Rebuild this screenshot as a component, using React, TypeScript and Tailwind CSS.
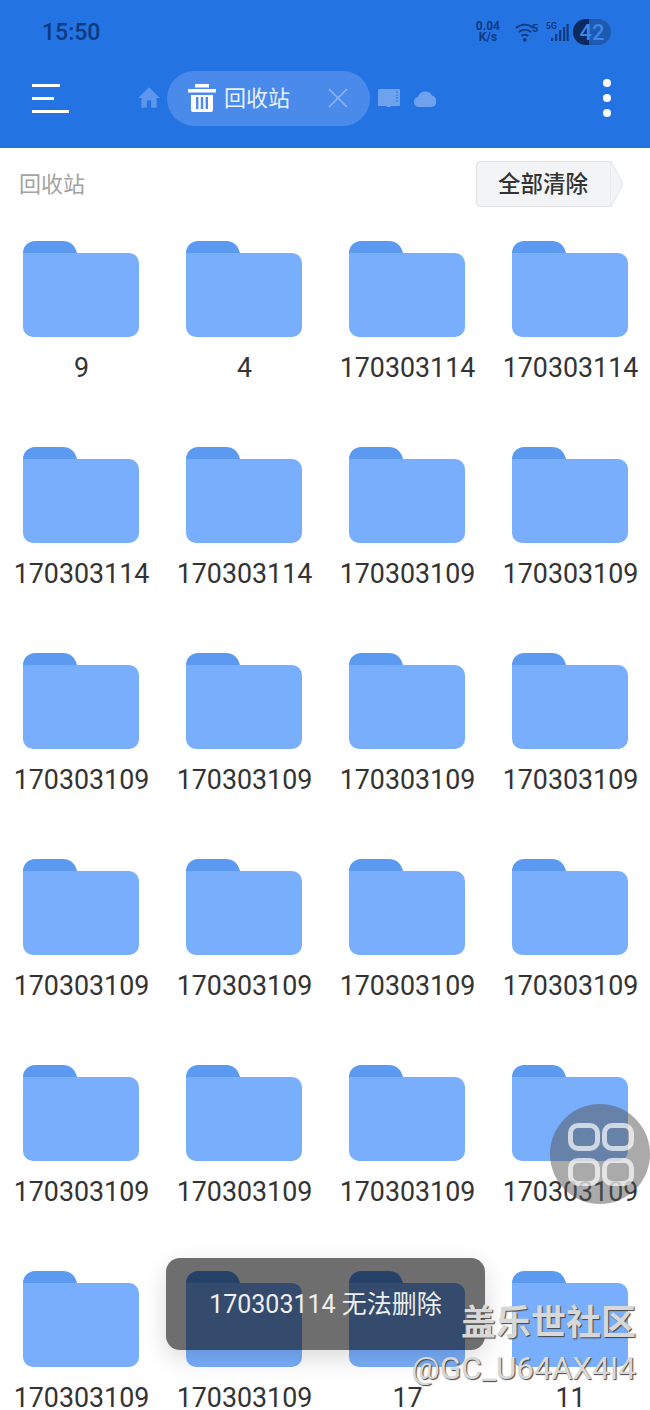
const labels = [
  "9", "4", "170303114", "170303114",
  "170303114", "170303114", "170303109", "170303109",
  "170303109", "170303109", "170303109", "170303109",
  "170303109", "170303109", "170303109", "170303109",
  "170303109", "170303109", "170303109", "170303109",
  "170303109", "170303109", "17", "11",
];

function Folder() {
  return (
    <svg width="116" height="96" viewBox="0 0 116 96" className="mr-[2px] block">
      <path d="M0 12a12 12 0 0 1 12-12h28c7 0 12 4 14 12z" fill="#5c9af2" />
      <path d="M0 12h106a10 10 0 0 1 10 10v64a10 10 0 0 1-10 10h-96a10 10 0 0 1-10-10z" fill="#78aefc" />
    </svg>
  );
}

function FolderItem({ label }: { label: string }) {
  return (
    <div className="flex h-[206px] flex-col items-center">
      <Folder />
      <div className="mt-[15px] text-[26.8px] leading-[32px] text-[#333]">{label}</div>
    </div>
  );
}

function StatusBar() {
  return (
    <div className="flex h-[62px] items-center justify-between pl-[42px] pr-[39px] pt-[2px] text-[#0f3a80]">
      <span className="text-[23px] font-medium leading-none">15:50</span>
      <div className="flex items-center">
        <div className="flex flex-col items-center text-[12px] font-bold leading-[11px]">
          <span>0.04</span>
          <span>K/s</span>
        </div>
        <svg width="24" height="20" viewBox="0 0 21 18" className="ml-[15px]" fill="none" stroke="#0f3a80" strokeWidth="1.700">
          <path d="M0.500 5.500c5-4 11-4 16 0M3 9c3.500-2.500 8-2.500 11 0M5.500 12.500c2-1.400 4-1.400 6 0" />
          <circle cx="8.500" cy="16" r="1.700" fill="#0f3a80" stroke="none" />
          <text x="15" y="9" fontSize="10" fontWeight="700" fill="#0f3a80" stroke="none">5</text>
          <path d="M14 12v5M18 12v5" strokeWidth="1" stroke="#3a6cb8" />
        </svg>
        <svg width="24" height="22" viewBox="0 0 24 22" className="ml-[7px]" fill="#0f3a80">
          <text x="0" y="8" fontSize="8.500" fontWeight="700">5G</text>
          <rect x="5" y="17" width="2.200" height="3" />
          <rect x="9" y="13" width="2.200" height="7" />
          <rect x="13" y="9" width="2.200" height="11" />
          <rect x="17" y="6" width="2.200" height="14" />
          <rect x="20.500" y="3" width="2.200" height="17" />
        </svg>
        <div className="relative ml-[3px] flex h-[26px] w-[38px] items-center justify-center overflow-hidden rounded-full bg-[#1d5bb3] text-[22px] font-medium text-[#3f86e6]">
          <div className="absolute inset-y-0 left-0 w-[16px] bg-[#0d2a5c]" />
          <span className="relative">42</span>
        </div>
      </div>
    </div>
  );
}

function Toolbar() {
  return (
    <div className="flex h-[86px] items-center pb-[14px] pl-[32px] pr-[39px]">
      <div className="flex w-[37px] flex-col gap-[10px]">
        <div className="h-[3px] w-[28px] bg-white" />
        <div className="h-[3px] w-[22px] bg-white" />
        <div className="h-[3px] w-[37px] bg-white" />
      </div>
      <svg width="26" height="26" viewBox="0 0 24 24" fill="#5e96ee" className="ml-[67px] mr-[5px]">
        <path d="M10 21v-7h4v7h5v-9h3L12 2 2 12h3v9z" />
      </svg>
      <div className="flex h-[55px] w-[203px] items-center rounded-full bg-[#4a8aea] pl-[21px] pr-[22px]">
        <svg width="28" height="28" viewBox="0 0 28 28" fill="#fff">
          <rect x="7" y="0" width="14" height="3.500" />
          <rect x="0" y="5" width="28" height="3.500" />
          <path d="M3 11h22v15a2 2 0 0 1-2 2h-18a2 2 0 0 1-2-2z" />
          <rect x="8" y="13" width="2.400" height="12" fill="#4a8aea" />
          <rect x="12.800" y="13" width="2.400" height="12" fill="#4a8aea" />
          <rect x="17.600" y="13" width="2.400" height="12" fill="#4a8aea" />
        </svg>
        <span className="ml-[8px] text-[22px] text-[#e8f1fd]">回收站</span>
        <svg width="20" height="20" viewBox="0 0 20 20" stroke="#8cb5f2" strokeWidth="1.700" className="ml-auto">
          <path d="M1 1l18 18M19 1l-18 18" />
        </svg>
      </div>
      <svg width="22" height="18" viewBox="0 0 22 18" className="ml-[8px]">
        <path d="M0 1a1 1 0 0 1 1-1h20a1 1 0 0 1 1 1v15a1 1 0 0 1-1 1h-8l-1 1h-3l-1-1h-8a1 1 0 0 1-1-1z" fill="#6fa2ee" />
        <path d="M18 3h2M18 6h2M18 9h2M18 12h2" stroke="#2f78e3" strokeWidth="1.200" />
      </svg>
      <svg width="22" height="18" viewBox="0 0 22 18" fill="#6fa2ee" className="ml-[14px]">
        <path d="M5 18a5 5 0 0 1-1-9.900 7.500 7.500 0 0 1 14-1.500 5.800 5.800 0 0 1-1 11.400z" />
      </svg>
      <div className="ml-auto flex flex-col gap-[7px]">
        <div className="h-[8px] w-[8px] rounded-full bg-white" />
        <div className="h-[8px] w-[8px] rounded-full bg-white" />
        <div className="h-[8px] w-[8px] rounded-full bg-white" />
      </div>
    </div>
  );
}

function App() {
  return (
    <div
      className="relative h-[1410px] w-[650px] overflow-hidden bg-white"
      style={{ fontFamily: 'Roboto, "Noto Sans CJK SC", sans-serif' }}
    >
      <div className="h-[148px] bg-[#2473e3]">
        <StatusBar />
        <Toolbar />
      </div>

      {/* Path row */}
      <div className="flex h-[93px] items-start justify-between pl-[19px] pr-[26px] pt-[13px]">
        <span className="mt-[9px] text-[22px] leading-[30px] text-[#a3a3a3]">回收站</span>
        <div className="flex h-[46px] items-center">
          <div className="flex h-[46px] w-[134px] items-center rounded-l-[5px] border border-r-0 border-[#e0e1e3] bg-[#f3f4f6] pl-[21px] pt-[2px] text-[22.500px] font-medium text-[#333]">
            全部清除
          </div>
          <svg width="14" height="46" viewBox="0 0 14 46">
            <path d="M0 .5h1l12 22.500-12 22.500h-1z" fill="#f3f4f6" stroke="#e0e1e3" strokeLinejoin="round" />
          </svg>
        </div>
      </div>

      {/* Folder grid */}
      <div className="grid w-[652px] grid-cols-4">
        {labels.map((label, i) => (
          <FolderItem key={i} label={label} />
        ))}
      </div>

      {/* Floating button */}
      <div className="absolute left-[550px] top-[1104px] grid h-[100px] w-[100px] grid-cols-[32px_32px] content-center gap-x-[2px] gap-y-[7px] rounded-full bg-[rgba(85,85,85,0.5)] pl-[18px]">
        {[0, 1, 2, 3].map((i) => (
          <div key={i} className="h-[28px] w-[32px] rounded-[10px] border-[5px] border-[rgba(255,255,255,0.68)]" />
        ))}
      </div>

      {/* Toast */}
      <div className="absolute left-[166px] top-[1258px] flex h-[92px] w-[319px] items-center justify-center rounded-[14px] bg-[rgba(0,0,0,0.57)] pt-[2px] text-[25px] text-[#eee] shadow-[0_8px_24px_rgba(0,0,0,0.15)]">
        170303114 无法删除
      </div>

      {/* Watermark */}
      <div className="absolute right-[14px] top-[1301px] flex flex-col items-end text-[#d8d8d8] [text-shadow:1px_1px_1px_#444]">
        <span className="text-[35px] font-bold leading-[46px]">盖乐世社区</span>
        <span className="mt-[3px] text-[31.500px] leading-[38px]">@GC_U64AX4I4</span>
      </div>
    </div>
  );
}

export default App;
